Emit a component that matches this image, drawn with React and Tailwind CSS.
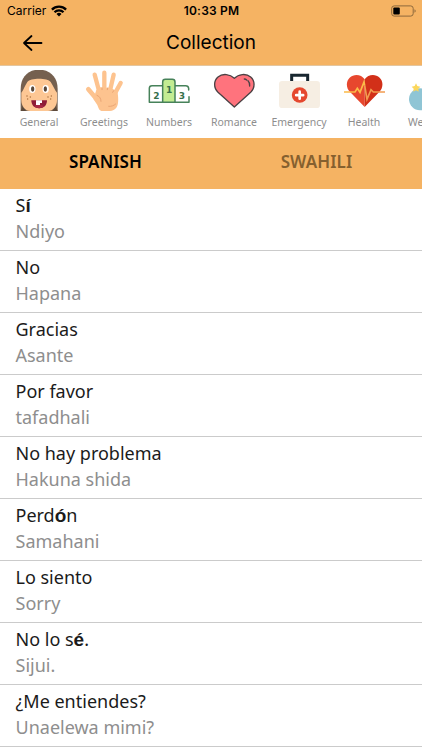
import React, { useState } from 'react';
import clsx from 'clsx';

const GeneralIcon = () => (
  <svg viewBox="54 18 126 126" className="w-[42px] h-[42px]">
    <path d="M62 141V75c0-36 22-58 55-58s56 22 56 58v66z" fill="#75604f" />
    <path d="M62 141h16l-10-14zM173 141h-16l10-14z" fill="#5d4a3b" />
    <path d="M64 86c7-8 10-20 18-32 9-13 61-13 70 0 8 12 12 24 19 32v22c0 18-11 33-27 33H91c-16 0-27-15-27-33z" fill="#fdc794" />
    <ellipse cx="97" cy="75" rx="9.500" ry="12" fill="#fff" />
    <ellipse cx="137" cy="75" rx="9.500" ry="12" fill="#fff" />
    <ellipse cx="98" cy="75" rx="5" ry="8" fill="#5a493c" />
    <ellipse cx="136" cy="75" rx="5" ry="8" fill="#5a493c" />
    <g fill="#a8713f">
      <circle cx="81" cy="96" r="2.200" />
      <circle cx="91" cy="99" r="2.200" />
      <circle cx="83" cy="105" r="2.200" />
      <circle cx="154" cy="96" r="2.200" />
      <circle cx="144" cy="99" r="2.200" />
      <circle cx="152" cy="105" r="2.200" />
    </g>
    <path d="M94 109h47c0 15-9 24-23.500 24S94 124 94 109z" fill="#8f1d38" />
    <path d="M103 127c8-6 21-6 29 0-7 8-22 8-29 0z" fill="#a82a45" />
    <path d="M108 109h18v8h-6v6h-12z" fill="#fff" />
  </svg>
);

const GreetingsIcon = () => (
  <svg viewBox="249 18 126 126" className="w-[42px] h-[42px]">
    <g stroke="#fdc38f" strokeWidth="13" strokeLinecap="round">
      <path d="M284 32l14 52M313 26v54M341 32l-12 52M362 57l-21 38" />
      <path d="M265 76l28 33" strokeWidth="14" />
    </g>
    <path d="M289 78l12-8 31 2 20 10c3 14 5 38-2 48-6 8-12 11-20 11h-22c-11 0-12-8-16-18l-12-18z" fill="#fdc38f" />
    <g fill="none" stroke="#eaa574" strokeWidth="3" strokeLinecap="round">
      <path d="M291 94c8 3 12 10 12 18M306 72v5M323 72l-1 5M341 80l-3 5M326 127c7 1 16-2 21-7" />
    </g>
  </svg>
);

const NumbersIcon = () => (
  <svg viewBox="24 18 126 126" className="w-[42px] h-[42px]">
    <g fill="none" stroke="#47825a" strokeWidth="4.500" strokeLinecap="round" strokeLinejoin="round">
      <path d="M68 115H28V73q0-8 8-8h32M105 65h32q8 0 9 8v5M147 98v17h-42" />
      <path d="M68 115V54q0-8 8-8h21q8 0 8 8v61z" fill="#c3ec92" />
    </g>
    <g fill="#37704c" fontSize="27" fontWeight="700" textAnchor="middle" fontFamily="DejaVu Sans, sans-serif">
      <text x="49" y="104">2</text>
      <text x="87.500" y="88">1</text>
      <text x="126" y="104">3</text>
    </g>
  </svg>
);

const RomanceIcon = () => (
  <svg viewBox="219 18 126 126" className="w-[42px] h-[42px]">
    <path
      d="M283 129l-49-44c-14-14-13-35 0-46 14-12 36-9 49 4 13-13 35-16 49-4 13 11 14 32 0 46z"
      fill="#ff737d"
      stroke="#4b4144"
      strokeWidth="4"
      strokeLinejoin="round"
    />
    <path d="M313 45c3 0 5 1 7 3M324 50c4 4 6 10 5 16" fill="none" stroke="#4b4144" strokeWidth="4" strokeLinecap="round" />
  </svg>
);

const EmergencyIcon = () => (
  <svg viewBox="24 18 126 126" className="w-[42px] h-[42px]">
    <path d="M65 52V34h48v18" fill="none" stroke="#182730" strokeWidth="9" />
    <rect x="27" y="51" width="123" height="81" rx="10" fill="#f6eee3" />
    <circle cx="89" cy="93" r="23.500" fill="#e5482f" />
    <path d="M89 83v21M78.500 93.500h21" stroke="#fff" strokeWidth="8" strokeLinecap="round" />
  </svg>
);

const HealthIcon = () => (
  <svg viewBox="219 18 126 126" className="w-[42px] h-[42px]">
    <path d="M284 129l-43-44c-14-14-13-34-2-44 13-12 35-10 45 5z" fill="#e7472e" />
    <path d="M284 129l43-44c14-14 13-34 2-44-13-12-35-10-45 5z" fill="#d23019" />
    <path d="M222 84h33l7-11 8 12 12-31 2 10" fill="none" stroke="#fbbb48" strokeWidth="5" />
    <path d="M284 64l7 42 12-29 7 7h35" fill="none" stroke="#f29c50" strokeWidth="5" />
  </svg>
);

const WeatherIcon = () => (
  <svg viewBox="414 18 126 126" className="w-[42px] h-[42px]">
    <circle cx="450" cy="106" r="33" fill="#8fc5d5" />
    <path d="M438 58l4 8 9 2-6 6 1 9-8-4-8 4 1-9-6-6 9-2z" fill="#fbd75c" />
  </svg>
);

const categories = [
  { name: 'General', Icon: GeneralIcon },
  { name: 'Greetings', Icon: GreetingsIcon },
  { name: 'Numbers', Icon: NumbersIcon },
  { name: 'Romance', Icon: RomanceIcon },
  { name: 'Emergency', Icon: EmergencyIcon },
  { name: 'Health', Icon: HealthIcon },
  { name: 'Weather', Icon: WeatherIcon },
];

// the accented letter is its own part, it uses the heavier fallback face
const phrases = [
  { text: ['S', 'í', ''], translation: 'Ndiyo' },
  { text: ['No'], translation: 'Hapana' },
  { text: ['Gracias'], translation: 'Asante' },
  { text: ['Por favor'], translation: 'tafadhali' },
  { text: ['No hay problema'], translation: 'Hakuna shida' },
  { text: ['Perd', 'ó', 'n'], translation: 'Samahani' },
  { text: ['Lo siento'], translation: 'Sorry' },
  { text: ['No lo s', 'é', '.'], translation: 'Sijui.' },
  { text: ['¿Me entiendes?'], translation: 'Unaelewa mimi?' },
];

const StatusBar = () => (
  <div className="grid grid-cols-3 items-center h-[22px] pl-[7px] pr-[6px] text-[12px] leading-none font-['Inter',sans-serif]">
    <div className="flex items-center gap-[5px]">
      <span>Carrier</span>
      <svg viewBox="0 0 16 12" className="w-4 h-3">
        <g fill="none" stroke="#000" strokeWidth="2.300">
          <path d="M.9 4.600a10.200 10.200 0 0 1 14.200 0" />
          <path d="M3.500 7.300a6.400 6.400 0 0 1 9 0" />
        </g>
        <path d="M8 11.500L5.500 9a3.600 3.600 0 0 1 5 0z" />
      </svg>
    </div>
    <div className="text-center font-semibold tracking-[0.2px] whitespace-nowrap">10:33 PM</div>
    <div className="flex justify-end">
      <svg viewBox="0 0 25 12" className="w-[25px] h-3">
        <rect x=".7" y=".9" width="21.500" height="10.200" rx="2.500" fill="none" stroke="#8d693c" />
        <rect x="2.300" y="2.500" width="6.500" height="7" rx="1" />
        <path d="M23.500 4.300v3.400q1.200-.5 1.200-1.700t-1.200-1.700z" fill="#8d693c" />
      </svg>
    </div>
  </div>
);

export default function App() {
  const [tab, setTab] = useState('SPANISH');

  return (
    <div className="w-[422px] h-[750px] overflow-hidden bg-white text-black font-['Noto_Sans',sans-serif]">
      <header className="h-[66px] bg-[#f5b363] border-b border-[#e3c6a0]">
        <StatusBar />
        <div className="grid grid-cols-[60px_1fr_60px] items-center h-[42px]">
          <button className="pl-[22px]" aria-label="Back">
            <svg viewBox="0 0 22 18" className="w-[22px] h-[18px]">
              <path d="M9.500 2L2 9l7.500 7M2.500 9h17" fill="none" stroke="#000" strokeWidth="1.800" strokeLinecap="round" strokeLinejoin="round" />
            </svg>
          </button>
          <h1 className="text-center text-[19px] leading-6 font-['Inter',sans-serif]">Collection</h1>
        </div>
      </header>

      <nav className="flex h-[72px] pl-[6.500px] pt-1 overflow-hidden">
        {categories.map(({ name, Icon }) => (
          <div key={name} className="flex flex-col items-center shrink-0 w-[65px]">
            <Icon />
            <span className="mt-[3px] text-[10.500px] leading-[14px] text-[#8e8e8e]">{name}</span>
          </div>
        ))}
      </nav>

      <div className="grid grid-cols-2 h-[50.500px] bg-[#f5b363]">
        {['SPANISH', 'SWAHILI'].map((label) => (
          <button
            key={label}
            onClick={() => setTab(label)}
            className={clsx(
              'pb-[3px] text-[17px] font-semibold tracking-[0.1px]',
              tab === label ? 'text-black' : 'text-[#85602f]'
            )}
          >
            {label}
          </button>
        ))}
      </div>

      <ul>
        {phrases.map(({ text, translation }) => (
          <li key={translation} className="h-[62.100px] pl-[15.500px] pt-[3px] border-b border-[#cbcbcb]">
            <p className="text-[18px] leading-[26px] text-[#1b1b1b]">
              {text[0]}
              {text[1] && <b className="font-bold font-['Liberation_Sans',sans-serif] text-[19px] leading-none">{text[1]}</b>}
              {text[2]}
            </p>
            <p className="text-[18px] leading-[26px] text-[#8e8e8e]">{translation}</p>
          </li>
        ))}
      </ul>
    </div>
  );
}
